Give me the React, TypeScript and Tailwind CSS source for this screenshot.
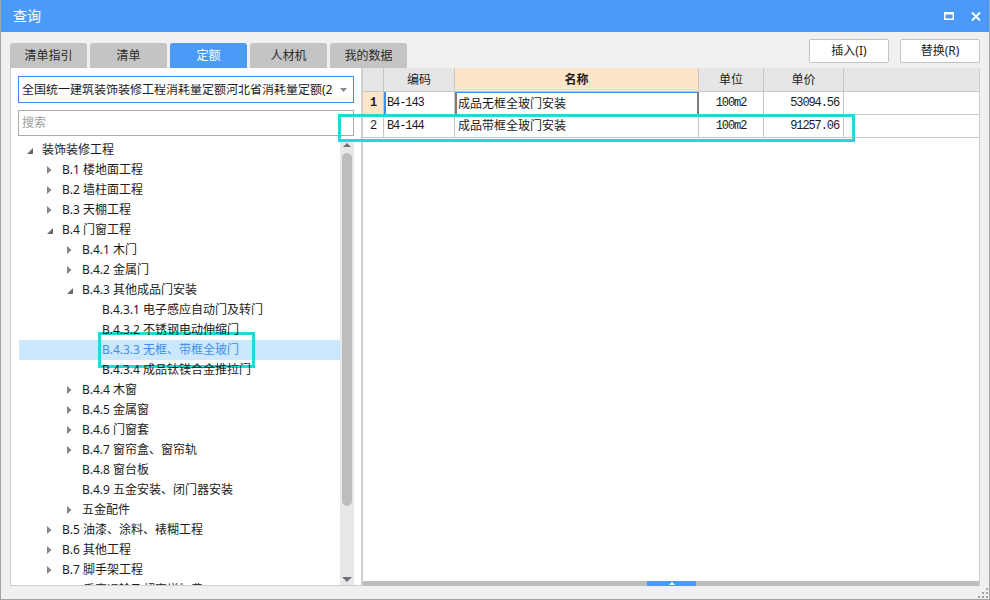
import React from 'react'

type TreeNode = {
  level: 0 | 1 | 2 | 3
  label: string
  state: 'open' | 'closed' | 'leaf'
  selected?: boolean
}

const tree: TreeNode[] = [
  { level: 0, label: '装饰装修工程', state: 'open' },
  { level: 1, label: 'B.1 楼地面工程', state: 'closed' },
  { level: 1, label: 'B.2 墙柱面工程', state: 'closed' },
  { level: 1, label: 'B.3 天棚工程', state: 'closed' },
  { level: 1, label: 'B.4 门窗工程', state: 'open' },
  { level: 2, label: 'B.4.1 木门', state: 'closed' },
  { level: 2, label: 'B.4.2 金属门', state: 'closed' },
  { level: 2, label: 'B.4.3 其他成品门安装', state: 'open' },
  { level: 3, label: 'B.4.3.1 电子感应自动门及转门', state: 'leaf' },
  { level: 3, label: 'B.4.3.2 不锈钢电动伸缩门', state: 'leaf' },
  { level: 3, label: 'B.4.3.3 无框、带框全玻门', state: 'leaf', selected: true },
  { level: 3, label: 'B.4.3.4 成品钛镁合金推拉门', state: 'leaf' },
  { level: 2, label: 'B.4.4 木窗', state: 'closed' },
  { level: 2, label: 'B.4.5 金属窗', state: 'closed' },
  { level: 2, label: 'B.4.6 门窗套', state: 'closed' },
  { level: 2, label: 'B.4.7 窗帘盒、窗帘轨', state: 'closed' },
  { level: 2, label: 'B.4.8 窗台板', state: 'leaf' },
  { level: 2, label: 'B.4.9 五金安装、闭门器安装', state: 'leaf' },
  { level: 2, label: '五金配件', state: 'closed' },
  { level: 1, label: 'B.5 油漆、涂料、裱糊工程', state: 'closed' },
  { level: 1, label: 'B.6 其他工程', state: 'closed' },
  { level: 1, label: 'B.7 脚手架工程', state: 'closed' },
  { level: 1, label: 'B.8 垂直运输及超高增加费', state: 'closed' },
]

const padByLevel = ['pl-[8px]', 'pl-[28px]', 'pl-[48px]', 'pl-[68px]']

const rows = [
  { no: '1', code: 'B4-143', name: '成品无框全玻门安装', unit: '100m2', price: '53094.56', active: true },
  { no: '2', code: 'B4-144', name: '成品带框全玻门安装', unit: '100m2', price: '91257.06', active: false },
]

const tabs = ['清单指引', '清单', '定额', '人材机', '我的数据']

function Arrow({ state }: { state: TreeNode['state'] }) {
  if (state === 'leaf') return <span className="w-[15px] shrink-0" />
  if (state === 'open') {
    return (
      <span className="w-[15px] shrink-0 flex items-center">
        <svg width="6" height="6" viewBox="0 0 6 6" className="mt-[1px]">
          <polygon points="6,0 6,6 0,6" fill="#6a6a6a" />
        </svg>
      </span>
    )
  }
  return (
    <span className="w-[15px] shrink-0 flex items-center">
      <svg width="5" height="8" viewBox="0 0 5 8">
        <polygon points="0,0 4.5,4 0,8" fill="#848484" />
      </svg>
    </span>
  )
}

export default function App() {
  const mono = "font-['Liberation_Mono',monospace] text-[12px] tracking-[-1.1px]"

  return (
    <div className="w-[990px] h-[600px] flex flex-col bg-[#f0f0f0] border-x border-b border-[#a3a3a3] font-['Noto_Sans','Noto_Sans_CJK_SC',sans-serif] text-[12px] text-[#1b1b1b] overflow-hidden">
      {/* title bar */}
      <div className="h-[32px] shrink-0 bg-[#4a9bf8] flex items-center pl-[12px] pr-[8px]">
        <span className="text-white text-[14px] leading-none">查询</span>
        <div className="ml-auto flex items-center gap-[17px]">
          <svg width="10" height="8" viewBox="0 0 10 8">
            <rect x="0.75" y="0.75" width="8.5" height="6.5" fill="none" stroke="white" strokeWidth="1.5" />
            <rect x="0" y="0" width="10" height="2.5" fill="white" />
          </svg>
          <svg width="10" height="9" viewBox="0 0 10 9">
            <path d="M1 0.5 L9 8.5 M9 0.5 L1 8.5" stroke="white" strokeWidth="2" />
          </svg>
        </div>
      </div>

      {/* tabs and buttons */}
      <div className="h-[36px] shrink-0 flex pl-[9px] pr-[9px]">
        <div className="flex items-end gap-[3px]">
          {tabs.map(t => (
            <div
              key={t}
              className={
                t === '定额'
                  ? 'w-[77px] h-[25px] rounded-t-[3px] bg-[#4a9bf8] text-white flex items-center justify-center'
                  : 'w-[77px] h-[25px] rounded-t-[3px] bg-[#c4c4c4] text-[#2a2a2a] flex items-center justify-center'
              }
            >
              {t}
            </div>
          ))}
        </div>
        <div className="ml-auto flex gap-[11px] pt-[7px]">
          <button className="w-[80px] h-[24px] bg-white border border-[#c3c3c3] rounded-[2px] text-[12px] text-[#222]">插入(I)</button>
          <button className="w-[80px] h-[24px] bg-white border border-[#c3c3c3] rounded-[2px] text-[12px] text-[#222]">替换(R)</button>
        </div>
      </div>

      {/* panels */}
      <div className="relative h-[518px] shrink-0 flex pl-[9px]">
        {/* left panel */}
        <div className="w-[352px] h-full bg-white border-x border-b border-[#cfcfcf] flex flex-col px-[7px] pt-[8px]">
          <div className="h-[27px] shrink-0 border border-[#3f8fea] flex items-center pl-[3px] pr-[6px]">
            <span className="flex-1 overflow-hidden whitespace-nowrap leading-none">全国统一建筑装饰装修工程消耗量定额河北省消耗量定额(2016)</span>
            <svg width="7" height="4" viewBox="0 0 7 4" className="ml-[7px] shrink-0">
              <polygon points="0,0 7,0 3.5,4" fill="#8a8a8a" />
            </svg>
          </div>
          <div className="h-[26px] shrink-0 mt-[7px] border border-[#ababab] flex items-center pl-[3px] text-[#a0a0a0]">搜索</div>

          <div className="flex-1 min-h-0 mt-[3px] flex">
            <div className="flex-1 min-w-0 pl-px pt-px overflow-hidden">
              {tree.map(n => (
                <div
                  key={n.label}
                  className={
                    n.selected
                      ? `relative h-[20px] flex items-center whitespace-nowrap bg-[#cce8ff] text-[#3d8fe8] ${padByLevel[n.level]}`
                      : `relative h-[20px] flex items-center whitespace-nowrap ${padByLevel[n.level]}`
                  }
                >
                  {n.selected && (
                    <div className="absolute left-[79px] top-[-8px] w-[157px] h-[36px] z-10 border-[3px] border-[#22d8d8] flex flex-col">
                      <div className="h-[5px] bg-white" />
                      <div className="flex-1" />
                      <div className="h-[5px] bg-white" />
                    </div>
                  )}
                  <Arrow state={n.state} />
                  <span className="relative z-20 leading-none">{n.label}</span>
                </div>
              ))}
            </div>
            {/* vertical scrollbar */}
            <div className="w-[14px] shrink-0 bg-[#e8e8e8] flex flex-col items-center pt-[4px] pb-[3px]">
              <svg width="8" height="4" viewBox="0 0 8 4">
                <polygon points="0,4 8,4 4,0" fill="#707070" />
              </svg>
              <div className="w-[10px] h-[353px] mt-[6px] rounded-full bg-[#bdbdbd]" />
              <div className="flex-1" />
              <svg width="10" height="5" viewBox="0 0 10 5">
                <polygon points="0,0 10,0 5,5" fill="#6f6f78" />
              </svg>
            </div>
          </div>
        </div>

        {/* right panel */}
        <div className="w-[618px] h-full bg-white border-x border-[#cfcfcf] flex flex-col">
          <div className="flex-1 min-h-0">
            <div className="flex h-[24px] border-b border-[#c6c6c6] bg-[#e6e6e6]">
              <div className="w-[21px] border-r border-[#c6c6c6]" />
              <div className="w-[71px] border-r border-[#c6c6c6] flex items-center justify-center">编码</div>
              <div className="w-[244px] border-r border-[#c6c6c6] bg-[#fde6c8] flex items-center justify-center font-bold">名称</div>
              <div className="w-[65px] border-r border-[#c6c6c6] flex items-center justify-center">单位</div>
              <div className="w-[80px] border-r border-[#c6c6c6] flex items-center justify-center">单价</div>
            </div>
            {rows.map(r => (
              <div key={r.no} className="flex h-[23px] border-b border-[#c6c6c6]">
                <div
                  className={
                    r.active
                      ? `w-[21px] border-r border-[#c6c6c6] bg-[#fde6c8] flex items-center justify-center font-bold ${mono}`
                      : `w-[21px] border-r border-[#c6c6c6] flex items-center justify-center ${mono}`
                  }
                >
                  {r.no}
                </div>
                <div className={r.active ? `w-[71px] border-r border-[#c6c6c6] border-l-2 border-l-[#3f8fea] flex items-center pl-[1px] ${mono}` : `w-[71px] border-r border-[#c6c6c6] flex items-center pl-[3px] ${mono}`}>
                  {r.code}
                </div>
                <div
                  className={
                    r.active
                      ? 'w-[244px] border-t border-t-[#3f8fea] border-x-2 border-x-[#7c7c7c] flex items-center pl-[1px]'
                      : 'w-[244px] border-r border-[#c6c6c6] flex items-center pl-[3px]'
                  }
                >
                  {r.name}
                </div>
                <div className={`w-[65px] border-r border-[#c6c6c6] flex items-center justify-center ${mono}`}>{r.unit}</div>
                <div className={`w-[80px] border-r border-[#c6c6c6] flex items-center justify-end pr-[4px] ${mono}`}>{r.price}</div>
              </div>
            ))}
          </div>
          {/* horizontal scrollbar */}
          <div className="h-[5px] shrink-0 bg-[#bdbdbd] flex">
            <div className="w-[284px]" />
            <div className="w-[49px] bg-[#4a9bf8] flex items-center justify-center">
              <svg width="6" height="3" viewBox="0 0 6 3">
                <polygon points="0,3 6,3 3,0" fill="white" />
              </svg>
            </div>
          </div>
        </div>

        {/* annotation box over the second table row */}
        <div className="absolute left-[337px] top-[46px] w-[517px] h-[28px] border-[3px] border-[#22d8d8] pointer-events-none" />
      </div>

      {/* bottom strip with resize grip */}
      <div className="flex-1 flex justify-end items-end pr-[1px] pb-[1px]">
        <svg width="10" height="10" viewBox="0 0 10 10">
          <rect x="8" y="0" width="2" height="2" fill="#a3a3a3" />
          <rect x="4" y="4" width="2" height="2" fill="#a3a3a3" />
          <rect x="8" y="4" width="2" height="2" fill="#a3a3a3" />
          <rect x="0" y="8" width="2" height="2" fill="#a3a3a3" />
          <rect x="4" y="8" width="2" height="2" fill="#a3a3a3" />
          <rect x="8" y="8" width="2" height="2" fill="#a3a3a3" />
        </svg>
      </div>
    </div>
  )
}
